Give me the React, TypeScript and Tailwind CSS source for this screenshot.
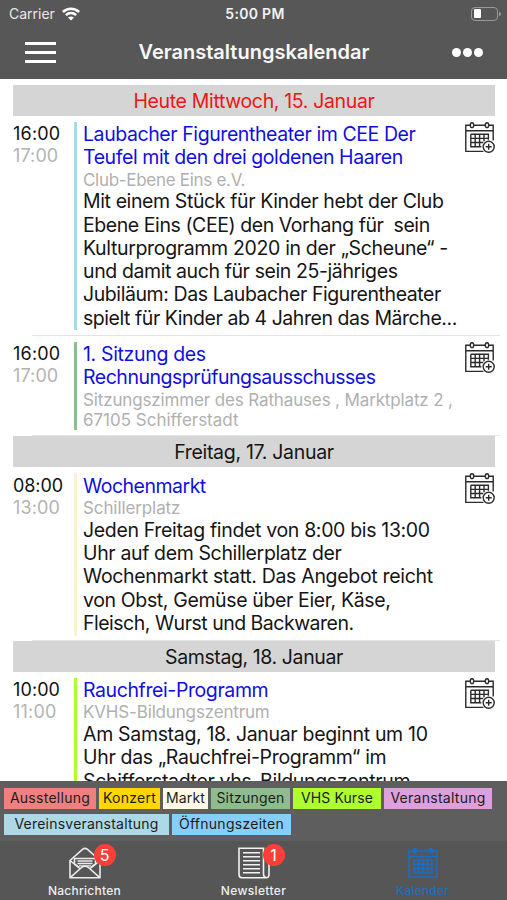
import React from 'react';

type Line = { text: string; track: string };
type Event = {
  start: string;
  startTrack: string;
  end: string;
  endTrack: string;
  color: string;
  height: string;
  offset: string;
  title: Line[];
  place: Line[];
  body: Line[];
};

const figurentheater: Event = {
  start: '16:00', startTrack: 'tracking-[0.2px]',
  end: '17:00', endTrack: 'tracking-[0.1px]',
  color: 'bg-[#add8e6]',
  height: 'h-[208px]',
  offset: 'pt-[1px]',
  title: [
    { text: 'Laubacher Figurentheater im CEE Der', track: 'tracking-[-0.42px]' },
    { text: 'Teufel mit den drei goldenen Haaren', track: 'tracking-[-0.42px]' },
  ],
  place: [{ text: 'Club-Ebene Eins e.V.', track: 'tracking-[-0.3px]' }],
  body: [
    { text: 'Mit einem Stück für Kinder hebt der Club', track: 'tracking-[-0.39px]' },
    { text: 'Ebene Eins (CEE) den Vorhang für\u00a0 sein', track: 'tracking-[-0.43px]' },
    { text: 'Kulturprogramm 2020 in der „Scheune“ -', track: 'tracking-[-0.34px]' },
    { text: 'und damit auch für sein 25-jähriges', track: 'tracking-[-0.4px]' },
    { text: 'Jubiläum: Das Laubacher Figurentheater', track: 'tracking-[-0.42px]' },
    { text: 'spielt für Kinder ab 4 Jahren das Märche...', track: 'tracking-[-0.45px]' },
  ],
};

const sitzung: Event = {
  start: '16:00', startTrack: 'tracking-[0.2px]',
  end: '17:00', endTrack: 'tracking-[0.1px]',
  color: 'bg-[#8fbc8f]',
  height: 'h-[88px]',
  offset: 'pt-[1px]',
  title: [
    { text: '1. Sitzung des', track: 'tracking-[-0.34px]' },
    { text: 'Rechnungsprüfungsausschusses', track: 'tracking-[-0.48px]' },
  ],
  place: [
    { text: 'Sitzungszimmer des Rathauses , Marktplatz 2 ,', track: 'tracking-[-0.14px]' },
    { text: '67105 Schifferstadt', track: 'tracking-[-0.02px]' },
  ],
  body: [],
};

const wochenmarkt: Event = {
  start: '08:00', startTrack: 'tracking-[-0.1px]',
  end: '13:00', endTrack: 'tracking-[0.1px]',
  color: 'bg-[#fdf1d3]',
  height: 'h-[163px]',
  offset: 'pt-[1.7px]',
  title: [{ text: 'Wochenmarkt', track: 'tracking-[-0.5px]' }],
  place: [{ text: 'Schillerplatz', track: 'tracking-[-0.1px]' }],
  body: [
    { text: 'Jeden Freitag findet von 8:00 bis 13:00', track: 'tracking-[-0.34px]' },
    { text: 'Uhr auf dem Schillerplatz der', track: 'tracking-[-0.37px]' },
    { text: 'Wochenmarkt statt. Das Angebot reicht', track: 'tracking-[-0.32px]' },
    { text: 'von Obst, Gemüse über Eier, Käse,', track: 'tracking-[-0.37px]' },
    { text: 'Fleisch, Wurst und Backwaren.', track: 'tracking-[-0.5px]' },
  ],
};

const rauchfrei: Event = {
  start: '10:00', startTrack: 'tracking-[0.1px]',
  end: '11:00', endTrack: 'tracking-[0.2px]',
  color: 'bg-[#adff2f]',
  height: 'h-[163px]',
  offset: 'pt-[1px]',
  title: [{ text: 'Rauchfrei-Programm', track: 'tracking-[-0.4px]' }],
  place: [{ text: 'KVHS-Bildungszentrum', track: 'tracking-[-0.16px]' }],
  body: [
    { text: 'Am Samstag, 18. Januar beginnt um 10', track: 'tracking-[-0.32px]' },
    { text: 'Uhr das „Rauchfrei-Programm“ im', track: 'tracking-[-0.32px]' },
    { text: 'Schifferstadter vhs-Bildungszentrum', track: 'tracking-[-0.34px]' },
  ],
};

function CalendarAddIcon() {
  return (
    <svg viewBox="0 0 30 32" className="-mt-[0.5px] h-8 w-[30px] shrink-0" fill="none" stroke="#2b2b2b" strokeWidth="1.4">
      <path d="M5 3.2H.8v26.2h17.6M9 3.2h11M24 3.2h4.2v15.2M.8 8.800h27.400" />
      <ellipse cx="7" cy="3.200" rx="1.700" ry="2.400" />
      <ellipse cx="22" cy="3.200" rx="1.700" ry="2.400" />
      <path d="M5.800 12.300h17.600v5.500M5.800 12.300v12.400h10.500M5.800 16.400h17.600M5.800 20.500h12.500M10.200 12.300v12.400M14.600 12.300v12.400M19 12.300v7" />
      <circle cx="23.700" cy="24.800" r="5.500" />
      <path d="M23.700 21.800v6M20.700 24.800h6" />
    </svg>
  );
}

function WifiIcon() {
  return (
    <svg viewBox="0 0 18 14" className="ml-[7px] h-[14px] w-[18px]" fill="none" stroke="#fff" strokeWidth="2.5">
      <path d="M.9 5C5.4.5 12.6.5 17.1 5" />
      <path d="M3.9 8.2c2.9-2.8 7.3-2.8 10.2 0" />
      <path d="M9 13.6 6 10.600c1.700-1.600 4.300-1.600 6 0z" fill="#fff" stroke="none" />
    </svg>
  );
}

function EnvelopeIcon() {
  return (
    <svg viewBox="0 0 32 32" className="h-8 w-8" fill="none" stroke="#ececec" strokeWidth="1.6" strokeLinejoin="round">
      <path d="M1 13.500v17.300h30V13.500L18.500 2.300q-2.500-1.800-5 0L1 13.500l10.500 8.500M31 13.500 20.500 22" />
      <path d="M1.500 30.300 12.500 20.500q3.500-2.500 7 0l11 9.800" />
      <path d="M5.500 17V11.500h21V17l-4.500 3.300M5.500 17l4.500 3.300" />
      <path d="M8.500 14h15M8.500 16.500h15M10 18.800h12" strokeWidth="1.300" />
    </svg>
  );
}

function NewspaperIcon() {
  return (
    <svg viewBox="0 0 32 32" className="h-8 w-8" fill="none" stroke="#f2f2f2" strokeWidth="1.600">
      <path d="M1 1.200h24.500V27q0 3.500 3 3.800H4Q1 30.500 1 27.500z" />
      <path d="M25.500 6H31v21.500q0 3.300-2.800 3.300" />
      <path d="M5 5.700h17M5 9.700h17M5 13.700h17M5 17.700h17M5 21.700h17M5 25.700h17" />
    </svg>
  );
}

function CalendarIcon() {
  return (
    <svg viewBox="0 0 30 32" className="h-8 w-[30px]" fill="none" stroke="#1b6ec2" strokeWidth="1.500">
      <path d="M1 4h28v26H1zM1 9.500h28" />
      <path d="M4.500 4h5M20.500 4h5" strokeWidth="4.500" />
      <path d="M7 1v5M23 1v5" strokeWidth="2.500" />
      <path d="M6 13h18v13H6zM6 17.300h18M6 21.600h18M10.500 13v13M15 13v13M19.500 13v13" />
    </svg>
  );
}

function DayHeader({ text, tone }: { text: string; tone: string }) {
  return (
    <div className={`ml-[13px] mr-[12px] h-[31px] shrink-0 bg-[#d5d5d5] text-center text-[19.5px] leading-[32px] ${tone}`}>
      {text}
    </div>
  );
}

function Lines({ lines, className }: { lines: Line[]; className: string }) {
  return (
    <>
      {lines.map((l) => (
        <div key={l.text} className={`whitespace-pre ${className} ${l.track}`}>{l.text}</div>
      ))}
    </>
  );
}

function EventRow({ event }: { event: Event }) {
  return (
    <div className={`flex shrink-0 items-start pl-[13px] pr-[12px] ${event.height}`}>
      <div className={`w-[61px] shrink-0 text-[18px] leading-[22px] ${event.offset}`}>
        <div className={`text-[#111] ${event.startTrack}`}>{event.start}</div>
        <div className={`text-[#b3b3b3] ${event.endTrack}`}>{event.end}</div>
      </div>
      <div className={`h-full w-[3px] shrink-0 ${event.color}`} />
      <div className={`min-w-0 flex-1 pl-[6px] ${event.offset}`}>
        <Lines lines={event.title} className="text-[19.5px] leading-[23.3px] text-[#0f0fe0]" />
        <Lines lines={event.place} className="text-[17px] leading-[20.7px] text-[#b0b0b0]" />
        <Lines lines={event.body} className="text-[19.5px] leading-[23.3px] text-[#151515]" />
      </div>
      <CalendarAddIcon />
    </div>
  );
}

function Tag({ text, className }: { text: string; className: string }) {
  return <div className={`h-[21px] text-center text-[14px] leading-[20px] text-[#1c1c1c] ${className}`}>{text}</div>;
}

function Badge({ text }: { text: string }) {
  return (
    <div className="absolute -right-[15px] -top-[3px] h-[22px] w-[22px] rounded-full bg-[#fc4039] text-center text-[16px] font-normal leading-[22px] text-white">
      {text}
    </div>
  );
}

export default function App() {
  return (
    <div className="flex h-[900px] w-[507px] flex-col overflow-hidden bg-white font-['Inter','Liberation_Sans',sans-serif]">
      <header className="flex h-[79px] shrink-0 flex-col bg-[#575757] text-white">
        <div className="grid h-[27px] grid-cols-3 items-center pl-[9px] pr-[6px] text-[14px]">
          <div className="flex items-center text-[#e8e8e8]">
            Carrier
            <WifiIcon />
          </div>
          <div className="text-center font-semibold tracking-[0.3px] text-[#f2f2f2]">5:00 PM</div>
          <div className="flex items-center justify-end">
            <div className="flex h-[14px] w-[27px] items-center rounded-[4px] border border-[#999] pl-[2px]">
              <div className="h-[9px] w-[7px] rounded-[1px] bg-white" />
            </div>
            <div className="ml-[1px] h-[4px] w-[2px] rounded-r bg-[#999]" />
          </div>
        </div>
        <div className="flex h-[50px] items-center justify-between pl-[25px] pr-[24px]">
          <div className="flex w-[31px] flex-col gap-[6px]">
            <div className="h-[3px] bg-white" />
            <div className="h-[3px] bg-white" />
            <div className="h-[3px] bg-white" />
          </div>
          <h1 className="text-[20px] font-semibold leading-[24px] tracking-[0px] text-[#f8f8f8]">Veranstaltungskalendar</h1>
          <div className="flex gap-[2px]">
            <div className="h-[9px] w-[9px] rounded-full bg-white" />
            <div className="h-[9px] w-[9px] rounded-full bg-white" />
            <div className="h-[9px] w-[9px] rounded-full bg-white" />
          </div>
        </div>
      </header>

      <main className="flex h-[702px] shrink-0 flex-col overflow-hidden pt-[6px]">
        <DayHeader text="Heute Mittwoch, 15. Januar" tone="tracking-[-0.35px] text-[#ee1515]" />
        <div className="h-[6px] shrink-0" />
        <EventRow event={figurentheater} />
        <div className="ml-[32px] mr-[7px] mt-[5px] h-px shrink-0 bg-[#e4e4e4]" />
        <div className="h-[6px] shrink-0" />
        <EventRow event={sitzung} />
        <div className="ml-[32px] mr-[7px] mt-[5px] h-px shrink-0 bg-[#e4e4e4]" />
        <DayHeader text="Freitag, 17. Januar" tone="tracking-[-0.31px] text-[#151515]" />
        <div className="h-[6px] shrink-0" />
        <EventRow event={wochenmarkt} />
        <div className="ml-[32px] mr-[7px] mt-[4px] h-px shrink-0 bg-[#e4e4e4]" />
        <DayHeader text="Samstag, 18. Januar" tone="tracking-[-0.4px] text-[#151515]" />
        <div className="h-[6px] shrink-0" />
        <EventRow event={rauchfrei} />
      </main>

      <section className="flex h-[60px] shrink-0 flex-col gap-[5px] bg-[#5e5e5e] pl-[4px] pt-[7px]">
        <div className="flex gap-[3px]">
          <Tag text="Ausstellung" className="w-[92px] bg-[#f08080] tracking-[0.27px]" />
          <Tag text="Konzert" className="w-[61px] bg-[#ffd700] tracking-[0.28px]" />
          <Tag text="Markt" className="w-[45px] bg-[#fff9e6] tracking-[0.18px]" />
          <Tag text="Sitzungen" className="w-[79px] bg-[#8fbc8f] tracking-[0.22px]" />
          <Tag text="VHS Kurse" className="w-[88px] bg-[#adff2f] tracking-[0.12px]" />
          <Tag text="Veranstaltung" className="w-[108px] bg-[#dda0dd] tracking-[0.27px]" />
        </div>
        <div className="flex gap-[3px]">
          <Tag text="Vereinsveranstaltung" className="w-[165px] bg-[#add8e6] tracking-[0.22px]" />
          <Tag text="Öffnungszeiten" className="w-[119px] bg-[#87cefa] tracking-[0.28px]" />
        </div>
      </section>

      <nav className="grid h-[59px] shrink-0 grid-cols-3 bg-[#565656] text-[12px] font-medium leading-[14px] text-[#eee]">
        <div className="flex flex-col items-center pt-[6px]">
          <div className="relative">
            <EnvelopeIcon />
            <Badge text="5" />
          </div>
          <span className="mt-[5px] tracking-[0.27px]">Nachrichten</span>
        </div>
        <div className="flex flex-col items-center pt-[6px]">
          <div className="relative">
            <NewspaperIcon />
            <Badge text="1" />
          </div>
          <span className="mt-[5px] tracking-[0.35px]">Newsletter</span>
        </div>
        <div className="flex flex-col items-center pt-[6px] text-[#1b6ec2]">
          <CalendarIcon />
          <span className="mt-[5px] tracking-[0.2px]">Kalender</span>
        </div>
      </nav>
    </div>
  );
}
